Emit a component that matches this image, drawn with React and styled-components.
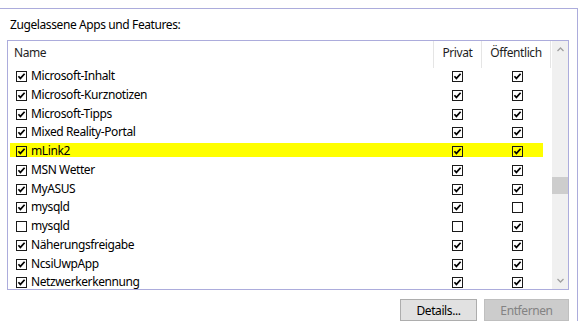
import React from 'react';
import styled, { createGlobalStyle } from 'styled-components';

const GlobalStyle = createGlobalStyle`
  html, body {
    margin: 0;
    padding: 0;
    background: #ffffff;
  }
  body {
    font-family: 'Noto Sans', 'Open Sans', sans-serif;
    font-size: 12px;
    letter-spacing: -0.4px;
    color: #000;
  }
`;

const GroupBox = styled.section`
  box-sizing: border-box;
  width: 578px;
  height: 313px;
  margin-top: 8px;
  padding: 8px 8px 0 7px;
  border-top: 1px solid #acacdc;
  border-right: 1px solid #acacdc;
`;

const Title = styled.div`
  padding-left: 3px;
  height: 16px;
  line-height: 16px;
  margin-bottom: 7px;
`;

const ListBox = styled.div`
  box-sizing: border-box;
  height: 250px;
  border: 1px solid #acacdc;
  display: flex;
  background: #fff;
`;

const ListContent = styled.div`
  flex: 1;
  display: flex;
  flex-direction: column;
  overflow: hidden;
`;

const Header = styled.div`
  display: grid;
  grid-template-columns: 425px 48px 70px;
  height: 27px;
  flex-shrink: 0;
`;

const HeaderCell = styled.div`
  box-sizing: border-box;
  display: flex;
  align-items: center;
  justify-content: ${(p) => (p.$left ? 'flex-start' : 'center')};
  padding-left: ${(p) => (p.$left ? '6px' : '0')};
  padding-bottom: 4px;
  color: #1e1e1e;
  border-left: ${(p) => (p.$left ? 'none' : '1px solid #e5e5e5')};
  border-right: ${(p) => (p.$last ? '1px solid #e5e5e5' : 'none')};
`;

const Rows = styled.div`
  padding-left: 2px;
`;

const Row = styled.div`
  height: 18.75px;
  width: 533px;
`;

const RowInner = styled.div`
  display: grid;
  grid-template-columns: 423px 48px 62px;
  height: 14px;
  background: ${(p) => (p.$highlight ? '#ffff00' : 'transparent')};
`;

const NameCell = styled.div`
  display: flex;
  align-items: flex-start;
  padding-left: 6px;
  gap: 4px;
  white-space: nowrap;
  line-height: 16px;
`;

const BoxCell = styled.div`
  display: flex;
  align-items: flex-start;
  justify-content: center;
  padding-left: ${(p) => p.$shift || 0}px;
`;

const CheckWrap = styled.span`
  display: block;
  flex-shrink: 0;
  margin-top: 3px;
  width: 11px;
  height: 11px;
`;

const ScrollBar = styled.div`
  width: 16px;
  background: #f0f0f0;
  display: flex;
  flex-direction: column;
`;

const ScrollButton = styled.div`
  height: 17px;
  display: flex;
  align-items: center;
  justify-content: center;
`;

const Track = styled.div`
  flex: 1;
`;

const Thumb = styled.div`
  height: 17px;
  background: #cdcdcd;
`;

const ButtonRow = styled.div`
  display: flex;
  justify-content: flex-end;
  gap: 7px;
  margin-top: 9px;
`;

const Button = styled.div`
  box-sizing: border-box;
  width: ${(p) => p.$w}px;
  height: 22px;
  display: flex;
  align-items: center;
  justify-content: center;
  background: ${(p) => (p.$disabled ? '#cccccc' : '#e1e1e1')};
  border: 1px solid ${(p) => (p.$disabled ? '#bfbfbf' : '#adadad')};
  color: ${(p) => (p.$disabled ? '#838383' : '#000')};
`;

const Check = ({ checked }) => (
  <CheckWrap>
    <svg width="11" height="11" viewBox="0 0 11 11" style={{ display: 'block' }}>
      <rect x="0.5" y="0.5" width="10" height="10" fill="none" stroke="#1a1a1a" />
      {checked && (
        <path d="M2.4 5.2 L4.4 7.4 L8.6 2.8" fill="none" stroke="#000" strokeWidth="1.7" />
      )}
    </svg>
  </CheckWrap>
);

const Chevron = ({ up }) => (
  <svg width="7" height="5" viewBox="0 0 7 5">
    <path
      d={up ? 'M0.5 4 L3.5 1 L6.5 4' : 'M0.5 1 L3.5 4 L6.5 1'}
      fill="none"
      stroke="#a0a0a0"
      strokeWidth="1.3"
    />
  </svg>
);

const apps = [
  ['Microsoft-Inhalt', true, true, true],
  ['Microsoft-Kurznotizen', true, true, true],
  ['Microsoft-Tipps', true, true, true],
  ['Mixed Reality-Portal', true, true, true],
  ['mLink2', true, true, true, true],
  ['MSN Wetter', true, true, true],
  ['MyASUS', true, true, true],
  ['mysqld', true, true, false],
  ['mysqld', false, false, true],
  ['Näherungsfreigabe', true, true, true],
  ['NcsiUwpApp', true, true, true],
  ['Netzwerkerkennung', true, true, true],
];

const App = () => (
  <>
    <GlobalStyle />
    <GroupBox>
      <Title>Zugelassene Apps und Features:</Title>
      <ListBox>
        <ListContent>
          <Header>
            <HeaderCell $left>Name</HeaderCell>
            <HeaderCell>Privat</HeaderCell>
            <HeaderCell $last>Öffentlich</HeaderCell>
          </Header>
          <Rows>
            {apps.map(([name, on, priv, pub, hl], i) => (
              <Row key={i}>
                <RowInner $highlight={hl}>
                  <NameCell>
                    <Check checked={on} />
                    {name}
                  </NameCell>
                  <BoxCell>
                    <Check checked={priv} />
                  </BoxCell>
                  <BoxCell $shift={10}>
                    <Check checked={pub} />
                  </BoxCell>
                </RowInner>
              </Row>
            ))}
          </Rows>
        </ListContent>
        <ScrollBar>
          <ScrollButton>
            <Chevron up />
          </ScrollButton>
          <Track>
            <Thumb style={{ marginTop: 119 }} />
          </Track>
          <ScrollButton>
            <Chevron />
          </ScrollButton>
        </ScrollBar>
      </ListBox>
      <ButtonRow>
        <Button $w={77}>Details...</Button>
        <Button $w={85} $disabled>
          Entfernen
        </Button>
      </ButtonRow>
    </GroupBox>
  </>
);

export default App;
